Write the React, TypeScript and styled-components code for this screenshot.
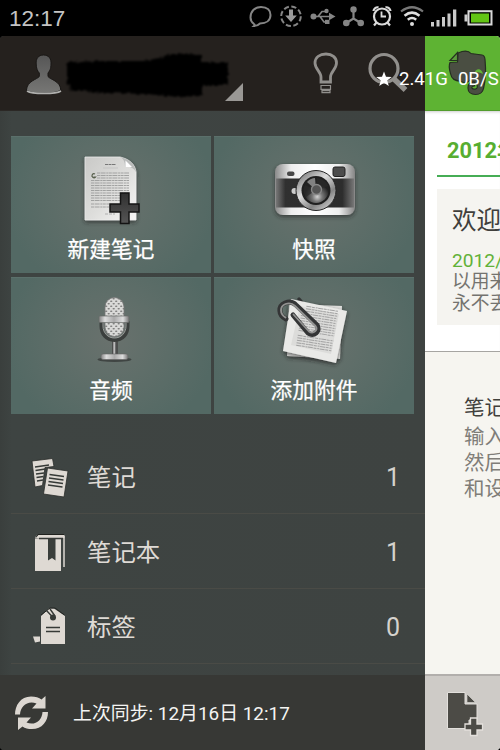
import React from 'react';
import styled, { createGlobalStyle } from 'styled-components';

const GlobalStyle = createGlobalStyle`
  * { box-sizing: border-box; }
  body { margin: 0; background: #000; overflow: hidden; }
`;

const Screen = styled.div`
  position: relative;
  display: flex;
  flex-direction: column;
  width: 500px;
  height: 750px;
  overflow: hidden;
  background: #000;
  font-family: Roboto, 'Noto Sans CJK SC', sans-serif;
`;

const StatusBar = styled.div`
  display: flex;
  align-items: center;
  justify-content: space-between;
  height: 36px;
  padding-left: 9px;
  flex: none;
`;

const Clock = styled.span`
  font-family: 'Liberation Sans', sans-serif;
  font-size: 22.5px;
  line-height: 36px;
  padding-top: 1px;
  color: #c4c4c4;
`;

const Glyph = styled.svg`
  display: block;
  flex: none;
`;

const Body = styled.div`
  display: flex;
  flex: 1;
  min-height: 0;
  border-radius: 4px;
  overflow: hidden;
`;

const Drawer = styled.div`
  display: flex;
  flex-direction: column;
  width: 425px;
  flex: none;
  background: linear-gradient(90deg, #3a3f3d, #3e4442 12px, #3e4341);
`;

const DrawerHeader = styled.div`
  height: 75px;
  flex: none;
  background: #25211e;
  border-bottom: 1px solid #2b2825;
`;

const Tiles = styled.div`
  display: grid;
  grid-template-columns: 200px 200px;
  grid-template-rows: 137px 137px;
  gap: 4px 3px;
  padding: 25px 0 0 11px;
  flex: none;
`;

const Tile = styled.div`
  display: flex;
  flex-direction: column;
  align-items: center;
  background: radial-gradient(ellipse 105px 100px at 50% 45%, #69716d 0%, #5f6e69 45%, #536964 100%);
  box-shadow: inset 0 1px 0 #5b706b;
`;

const TileLabel = styled.span`
  margin-top: 5px;
  font-size: 21.7px;
  line-height: 30px;
  color: #fff;
  -webkit-text-stroke: 0.25px #fff;
`;

const List = styled.div`
  display: flex;
  flex-direction: column;
  flex: 1;
  padding: 25px 0 0 11px;
`;

const Row = styled.div`
  display: flex;
  align-items: center;
  height: 75px;
  padding: 3px 25px 0 17px;
  border-bottom: 1px solid #4a4b46;
`;

const RowLabel = styled.span`
  flex: 1;
  margin-left: 15px;
  font-size: 24.4px;
  line-height: 36px;
  color: #dedad5;
`;

const RowCount = styled.span`
  font-size: 25px;
  line-height: 36px;
  color: #d5d2cd;
`;

const SyncBar = styled.div`
  display: flex;
  align-items: center;
  height: 75px;
  flex: none;
  padding: 0 0 0 11px;
  background: #373835;
`;

const SyncText = styled.span`
  margin-left: 21px;
  padding-top: 2px;
  font-size: 18.9px;
  line-height: 30px;
  color: #f4f4f2;
  white-space: nowrap;
`;

const Notes = styled.div`
  display: flex;
  flex-direction: column;
  flex: 1;
  min-width: 0;
  overflow: hidden;
  background: #fff;
  white-space: nowrap;
`;

const BrandBar = styled.div`
  height: 75px;
  flex: none;
  background: #5eb333;
  border-bottom: 1px solid #529c2c;
`;

const Feed = styled.div`
  height: 240px;
  flex: none;
  padding-left: 12px;
  box-shadow: inset 0 3px 3px -2px #ccc;
`;

const Month = styled.div`
  height: 66px;
  padding: 25px 0 0 10px;
  border-bottom: 2px solid #46ad55;
  font-size: 21.8px;
  font-weight: 700;
  line-height: 30px;
  color: #57ae31;
`;

const NoteCard = styled.div`
  height: 136px;
  margin-top: 12px;
  padding: 13px 0 0 15px;
  background: #f5f4f0;
`;

const NoteTitle = styled.div`
  font-size: 24.5px;
  line-height: 38px;
  color: #403f3c;
`;

const NoteDate = styled.div`
  margin-top: 10px;
  font-size: 19.2px;
  line-height: 22px;
  color: #61b138;
`;

const NoteLine = styled.div`
  font-size: 18.8px;
  line-height: 21.7px;
  color: #74736f;
`;

const Help = styled.div`
  flex: 1;
  padding: 40px 0 0 39px;
  border-top: 1px solid #a6a5a2;
  background: #f6f5f0;
`;

const HelpTitle = styled.div`
  font-size: 20.5px;
  line-height: 32px;
  color: #41403c;
`;

const HelpLine = styled.div`
  position: relative;
  top: 1px;
  font-size: 20.5px;
  line-height: 25.9px;
  color: #7f7d78;
`;

const AddBar = styled.div`
  height: 76px;
  flex: none;
  border-top: 2px solid #b2afac;
  background: #cecbc7;
`;

const SpeedOverlay = styled.div`
  position: absolute;
  left: 376px;
  top: 66px;
  display: flex;
  align-items: center;
  height: 25px;
  font-size: 18.6px;
  color: #fff;
  white-space: pre;
`;

const SpeedValue = styled.span<{ $gap: number }>`
  margin-left: ${(p) => p.$gap}px;
`;

const StatusIcons = () => (
  <Glyph width="260" height="36" viewBox="240 0 260 36" fill="none">
    <g stroke="#858585" strokeWidth="2">
      <path d="M254 24c-2-1.500-3.500-3.500-3.500-6.500 0-6 4-10.500 10.500-10.500s9.500 3.500 9.500 8c0 5.500-4.500 8.500-10.500 8.500-1.500 1.500-3 2.500-6 2.500 .8-.7 1-1.300 0-2z" />
      <circle cx="291" cy="16.300" r="9.800" strokeDasharray="5.200 2.500" />
    </g>
    <path d="M289 9.500h4v6h3.800L291 22l-5.800-6.500h3.800z" fill="#999" />
    <g stroke="#858585" strokeWidth="1.700">
      <path d="M314 16.500h17M318 16.500l4-5h4M320 16.500l4 5.500h3" />
    </g>
    <g fill="#858585">
      <circle cx="313.500" cy="16.500" r="3" /><path d="M329 12.800l6.500 3.700-6.500 3.700z" />
      <circle cx="326.500" cy="11" r="2.200" /><path d="M325 19.800h4.500V24H325z" />
      <circle cx="353.500" cy="9.500" r="3.200" /><circle cx="346.300" cy="23" r="3.300" /><circle cx="360.700" cy="23" r="3.300" />
    </g>
    <path d="M353.500 9v9.500M346.300 23l7.200-4.500 7.200 4.500" stroke="#858585" strokeWidth="2.200" />
    <g stroke="#dadada" strokeWidth="2.200">
      <circle cx="382" cy="16.500" r="8" /><path d="M381.500 11.500v5h4.500" strokeWidth="1.800" />
      <path d="M373.500 11a4 4 0 0 1 5-3.600M390.500 11a4 4 0 0 0-5-3.600M376.500 22.500l-2.500 3M387.500 22.500l2.500 3" />
    </g>
    <path d="M401 11.500q11-8.500 22 0" stroke="#777" strokeWidth="2.200" />
    <path d="M404.500 15.800q7.500-6.300 15 0M407.800 19.800q4.200-3.500 8.400 0" stroke="#dedede" strokeWidth="2.500" />
    <circle cx="412" cy="24" r="2" fill="#ddd" />
    <path d="M431 22h3v4.500h-3zM436.500 20h3v6.500h-3zM442 17h3v9.500h-3zM447.500 13.500h3v13h-3zM453 9.500h3.300v17H453z" fill="#c9c9c9" />
    <rect x="468.500" y="11.200" width="23" height="13.300" stroke="#d8d8d8" strokeWidth="2" />
    <path d="M464.500 14.500h3v7h-3z" fill="#ccc" /><path d="M471 13.500h18v9h-18z" fill="#62c414" />
  </Glyph>
);

const HeaderArt = () => (
  <Glyph width="425" height="74" viewBox="0 36 425 74" fill="none">
    <defs>
      <linearGradient id="person" x2="0" y2="1"><stop stopColor="#565656" /><stop offset="1" stopColor="#777775" /></linearGradient>
      <filter id="rough" x="-5%" y="-20%" width="110%" height="140%">
        <feTurbulence type="fractalNoise" baseFrequency=".25" numOctaves="2" seed="4" />
        <feDisplacementMap in="SourceGraphic" scale="4" xChannelSelector="R" yChannelSelector="G" />
        <feGaussianBlur stdDeviation=".8" />
      </filter>
    </defs>
    <path d="M43.500 55c5 0 8 3.500 7.500 9 0 5-1.500 7-3 9v3.500c2 3 12.500 4.500 12.800 13.500-5 4.500-29.500 4.500-34.300 0 .5-9 10.500-10.500 12.800-13.500V73c-2-2-3-5-3.100-9-.5-5.500 2.300-9 7.300-9z" fill="url(#person)" stroke="#191715" />
    <path d="M27 91c5 3.300 29 3.300 34 0" stroke="#b0b0ae" strokeWidth="1.500" />
    <path filter="url(#rough)" d="M67 62l36-1h40l17-3 10-4h17l14 1v7h27v23h-26v11l-25 1-30-3-45-1-19-2H71l-1-6h-3z" fill="#000" />
    <path d="M243 83v18h-18z" fill="#9a9895" />
    <g stroke="#918f8c">
      <path d="M321 82v-5c0-5-6-8-6-14 0-6 5-9 11-9s10.500 3.500 10.500 9c0 6-6 9-6 14v5z" strokeWidth="2.800" />
      <path d="M321 85.500h9.500v3.800H321zM322 90.700h8v2h-8z" strokeWidth="1.200" />
      <circle cx="384" cy="68.500" r="14" strokeWidth="3.200" />
      <path d="M394 79l11.500 11" strokeWidth="5.500" />
    </g>
  </Glyph>
);

const ElephantLogo = () => (
  <Glyph width="75" height="74" viewBox="425 36 75 74">
    <path d="M458 53l4-1.500c4-1 7-.5 9 2l11 1.500c2 .3 2.800 2 3 4.500 1 10 .5 21-1.500 29-1 5-4 6-8 6-5 0-7.500-3-7.500-6.500 0-5 3-6.500 6.500-6v4c-2 0-3 1-2.500 2.200 1 1.500 5 1.300 5.200-.7 .5-3-.5-4-3.700-4-1.500 0-2.500-2-3-4-2 3-6 4-9.500 2-6-1-9.500-2-10.500-8-1.500-5-2-8-.5-11l7.500-.5z" fill="#4a4e42" stroke="#252f20" strokeWidth="1.200" />
    <path d="M450 60.500l7.500-8v8z" fill="#5c9a3e" stroke="#263021" strokeWidth="1.200" />
    <path d="M475 72c1-4 7-4 8 2-3-1.500-5-2-8-2z" fill="#62b638" />
  </Glyph>
);

const NewNoteArt = () => (
  <Glyph width="100" height="94" viewBox="61 136 100 94">
    <defs>
      <linearGradient id="paper" x2="1" y2="1"><stop stopColor="#c9c9c7" /><stop offset=".55" stopColor="#dededc" /><stop offset="1" stopColor="#f7f7f6" /></linearGradient>
      <linearGradient id="plus" x2="0" y2="1"><stop stopColor="#303030" /><stop offset="1" stopColor="#555" /></linearGradient>
      <filter id="shade" x="-20%" y="-20%" width="140%" height="150%"><feDropShadow dx="0" dy="2" stdDeviation="2" floodColor="#222" floodOpacity=".65" /></filter>
    </defs>
    <path filter="url(#shade)" d="M85 157h35c9 2 15 7 16 15v48H85z" fill="url(#paper)" stroke="#eee" strokeWidth=".7" />
    <path d="M120 157c4 2 5 5 5 10 5-1 9 1 11 5-1-8-7-13-16-15z" fill="#b9bbba" />
    <path d="M125.500 160.500v6.500h6.500z" fill="#fff" />
    <path d="M105 164.500h11" stroke="#777" strokeWidth="1.200" strokeDasharray="3 .5" />
    <path d="M103 168h15" stroke="#bbb" strokeWidth=".6" />
    <path d="M97 173h32M97 175.500h32M97 178h32M91 180.500h38M91 183h38M91 185.500h38M91 188h38M91 190.500h38M91 193h38M91 195.500h34M91 198h34M91 200.500h34M91 204h18M91 207h18" stroke="#a1a2a1" strokeWidth="1.100" strokeDasharray="3 .6 5 .7 2 .5" />
    <path d="M95 174a2 2 0 1 0 .5 3h-2" fill="none" stroke="#58604d" strokeWidth="1.200" />
    <path d="M105 214h10" stroke="#999" strokeWidth=".7" strokeDasharray="3 1" />
    <path d="M120.500 193h8.500v11h10v8h-10v11.500h-8.500V212H110v-8h10.500z" fill="url(#plus)" stroke="#141414" strokeWidth="1.500" />
  </Glyph>
);

const CameraArt = () => (
  <Glyph width="100" height="94" viewBox="264 136 100 94">
    <defs>
      <linearGradient id="silver"><stop stopColor="#8a8a8a" /><stop offset=".2" stopColor="#eee" /><stop offset=".5" stopColor="#fff" /><stop offset=".8" stopColor="#eee" /><stop offset="1" stopColor="#858585" /></linearGradient>
      <linearGradient id="leather"><stop stopColor="#777" /><stop offset=".12" stopColor="#303030" /><stop offset=".85" stopColor="#2d2d2d" /><stop offset="1" stopColor="#777" /></linearGradient>
      <linearGradient id="ring" x1=".1" x2=".9" y2="1"><stop stopColor="#707070" /><stop offset=".4" stopColor="#ddd" /><stop offset=".7" stopColor="#858585" /><stop offset="1" stopColor="#ddd" /></linearGradient>
      <radialGradient id="glass" cx=".55" cy=".75"><stop stopColor="#d2d2d2" /><stop offset=".4" stopColor="#777" /><stop offset="1" stopColor="#222" /></radialGradient>
    </defs>
    <rect filter="url(#shade)" x="275" y="164" width="80" height="51" rx="8" fill="url(#silver)" />
    <path d="M276 178.500h78v29h-78z" fill="url(#leather)" />
    <rect x="287" y="171.500" width="7.500" height="4.500" rx="2" fill="#484848" />
    <rect x="333" y="167" width="12" height="9.500" rx="2" fill="#4c4c4c" stroke="#222" />
    <circle cx="294.500" cy="191" r="3" fill="#ccc" />
    <circle cx="316" cy="190.500" r="20" fill="url(#ring)" stroke="#252525" />
    <circle cx="316" cy="190.500" r="14.500" fill="#202020" />
    <circle cx="316" cy="190.500" r="12.500" fill="url(#glass)" />
    <path d="M316 190l1-12c6 1 10 4 11 8zM316 190l-10 7c-3-4-3-8-1-12z" fill="#292929" opacity=".75" />
    <path d="M316 190l-9-8c3-3 5-4 8-4z" fill="#aaa" opacity=".7" />
    <circle cx="316.500" cy="189.500" r="5" fill="#555" stroke="#888" strokeWidth="1.300" />
  </Glyph>
);

const MicArt = () => (
  <Glyph width="100" height="94" viewBox="61 277 100 94">
    <defs>
      <pattern id="mesh" width="5" height="5" patternUnits="userSpaceOnUse">
        <rect width="5" height="5" fill="#d9d9d7" /><ellipse cx="1.200" cy="1.200" rx="1.200" ry=".7" fill="#7c7c7b" /><ellipse cx="3.700" cy="3.700" rx="1.200" ry=".7" fill="#7c7c7b" />
      </pattern>
      <linearGradient id="band"><stop stopColor="#858585" /><stop offset=".2" stopColor="#ddd" /><stop offset=".5" stopColor="#aaa" /><stop offset=".8" stopColor="#ddd" /><stop offset="1" stopColor="#777" /></linearGradient>
    </defs>
    <ellipse cx="114.500" cy="359.500" rx="17" ry="2.500" fill="#222" opacity=".55" />
    <path d="M112 339h6v20h-6z" fill="#4c4e4d" /><path d="M113.300 340h2v19h-2z" fill="#bbb" />
    <path d="M101.500 321v5c0 8 5 14 13 14s13-6 13-14v-5" fill="none" stroke="#3b3f3d" strokeWidth="4" />
    <path d="M103 321v5c0 7 5 12 11.500 12S126 333 126 326v-5" fill="none" stroke="#9b9d9b" strokeWidth="1" />
    <rect x="105" y="297.500" width="19" height="39" rx="9.500" fill="url(#mesh)" stroke="#777" strokeWidth=".8" />
    <rect x="99" y="316" width="30" height="6.500" rx="1" fill="url(#band)" stroke="#686b69" strokeWidth=".7" />
    <rect x="101" y="354" width="27" height="5.500" rx="2" fill="url(#band)" stroke="#666" strokeWidth=".6" />
  </Glyph>
);

const AttachArt = () => (
  <Glyph width="100" height="94" viewBox="264 277 100 94" fill="none" strokeLinejoin="round" strokeLinecap="round">
    <path d="M299 299l5 6" stroke="#343536" strokeWidth="3.500" />
    <path filter="url(#shade)" d="M289 304l53 2-2 53-53-3z" fill="#dededc" />
    <path filter="url(#shade)" d="M291 299l56 12-11 52-53-12z" fill="#e9e9e7" />
    <path d="M300 306l39 8-8 40-40-9z" fill="#dcdcda" />
    <g transform="rotate(9 315 335)" stroke="#a3a3a3" strokeLinecap="butt" strokeWidth="1" strokeDasharray="5 .6 3 .8 2 .5">
      <path d="M302 308h32M302 310.500h32M302 313h32M298 315.500h36M298 318h36M298 320.500h36M298 323h36M298 325.500h36M298 328h36M298 330.500h36M298 333h36M298 338h36M298 340.500h36M298 343h36M298 345.500h36M298 348h36" />
    </g>
    <path d="M286 319c-8-4-8-13-1-16 4-1.500 8-1 11 2l21 20c4 6-3 12-9 8l-15-18" stroke="#343536" strokeWidth="5" />
    <path d="M285.500 317.500c-6-4-6-11 0-13.500 4-1.500 7-.5 9.500 2l20.500 20c3 4-2 8.500-6.500 5.500l-15.500-17" stroke="#929291" strokeWidth="1.800" />
  </Glyph>
);

const NotesIcon = () => (
  <Glyph width="44" height="48" viewBox="28 452 44 48">
    <path d="M32 459l20.500-2.500 1.500 8-9 1-2.500 18-7.500 1.500z" fill="#ded9d3" stroke="#292c2a" strokeWidth=".8" />
    <path d="M35 465l14-2M35.500 468.500l10-1.500M36 472l8-1M36.500 475.500l7-1M37 479l6-1" stroke="#363a37" strokeWidth="1.300" />
    <path d="M47.500 466l20.500 3-4 26-20.500-3z" fill="#ded9d3" stroke="#292c2a" strokeWidth=".8" />
    <path d="M49.500 472.500l14.500 2M49 476l14.500 2M48.500 479.500l14.500 2M48 483l14.500 2" stroke="#363a37" strokeWidth="1.300" />
  </Glyph>
);

const NotebookIcon = () => (
  <Glyph width="44" height="48" viewBox="28 528 44 48">
    <path d="M35 537q1-3 4-3h25.500v3l-26 .5z" fill="#ded9d3" />
    <path d="M36 536.500l2-3h26" fill="none" stroke="#20221f" />
    <path d="M35 537.500h26V570H35z" fill="#ded9d3" />
    <path d="M39 537.500h24" stroke="#373b38" strokeWidth="1.400" />
    <path d="M48 538h7.500v21.500l-3.500-2.500-4 2.500z" fill="#393d3a" />
    <path d="M64 535v31" stroke="#ded9d3" strokeWidth="1.500" />
  </Glyph>
);

const TagIcon = () => (
  <Glyph width="44" height="48" viewBox="28 603 44 48">
    <path d="M41 615l8-7.500h5L65 615v28H41z" fill="#ded9d3" />
    <path d="M41 614l9-7h5l9.500 7" fill="none" stroke="#222522" />
    <circle cx="53" cy="616.500" r="3" fill="#363a37" />
    <path d="M46.500 609.500l7.500 8M50 608l5 7" stroke="#363a37" strokeWidth="1.400" />
    <path d="M46 626.500h14M46 630.500h14" stroke="#363a37" strokeWidth="1.500" />
    <path d="M33 635.500h7v5l-5 1z" fill="#ded9d3" />
  </Glyph>
);

const SyncIcon = () => (
  <Glyph width="41" height="44" viewBox="11 691 41 44" fill="#dcd7d1">
    <path d="M15 714.500c0-9 5.500-18 16-18 4.500 0 8 1 10.500 3l4-3.500v12.500H32l4.500-5c-9-3.500-16 3-16.500 11z" />
    <path d="M48 712c0 9.500-6 17-16 17-4 0-7-.5-9.500-2.500L18 730v-12.500h13l-4.500 5c8 3.500 15.500-1.500 16-10.500z" />
  </Glyph>
);

const AddNoteIcon = () => (
  <Glyph width="75" height="74" viewBox="425 676 75 74" fill="#4c4b46" stroke="#e3e0dc">
    <path d="M447.500 692.500H465V704h12v16h-8v8.500h-21.500z" strokeWidth="1" />
    <path d="M467 694l8.500 8.500H467z" strokeWidth=".6" />
    <path d="M470.500 718h6.500v6h5.500v6H477v5.500h-6.500V730H465v-6h5.500z" strokeWidth="1.300" />
  </Glyph>
);

const tiles = [
  { label: '新建笔记', Art: NewNoteArt },
  { label: '快照', Art: CameraArt },
  { label: '音频', Art: MicArt },
  { label: '添加附件', Art: AttachArt },
];

const rows = [
  { label: '笔记', count: 1, Icon: NotesIcon },
  { label: '笔记本', count: 1, Icon: NotebookIcon },
  { label: '标签', count: 0, Icon: TagIcon },
];

export default function App() {
  return (
    <>
      <GlobalStyle />
      <Screen>
        <StatusBar>
          <Clock>12:17</Clock>
          <StatusIcons />
        </StatusBar>
        <Body>
          <Drawer>
            <DrawerHeader><HeaderArt /></DrawerHeader>
            <Tiles>
              {tiles.map(({ label, Art }) => (
                <Tile key={label}><Art /><TileLabel>{label}</TileLabel></Tile>
              ))}
            </Tiles>
            <List>
              {rows.map(({ label, count, Icon }) => (
                <Row key={label}><Icon /><RowLabel>{label}</RowLabel><RowCount>{count}</RowCount></Row>
              ))}
            </List>
            <SyncBar>
              <SyncIcon />
              <SyncText>上次同步: 12月16日 12:17</SyncText>
            </SyncBar>
          </Drawer>
          <Notes>
            <BrandBar><ElephantLogo /></BrandBar>
            <Feed>
              <Month>2012年</Month>
              <NoteCard>
                <NoteTitle>欢迎</NoteTitle>
                <NoteDate>2012/</NoteDate>
                <NoteLine>以用来</NoteLine>
                <NoteLine>永不丢</NoteLine>
              </NoteCard>
            </Feed>
            <Help>
              <HelpTitle>笔记</HelpTitle>
              <HelpLine>输入</HelpLine>
              <HelpLine>然后</HelpLine>
              <HelpLine>和设</HelpLine>
            </Help>
            <AddBar><AddNoteIcon /></AddBar>
          </Notes>
        </Body>
        <SpeedOverlay>
          <Glyph width="16" height="16" viewBox="0 0 16 16" fill="#fff">
            <path d="M8 .5l2 5.300 5.800.2-4.600 3.500 1.600 5.500L8 11.800 3.200 15l1.600-5.500L.2 6l5.800-.2z" />
          </Glyph>
          <SpeedValue $gap={7}>2.41G</SpeedValue>
          <SpeedValue $gap={10}>0B/S</SpeedValue>
        </SpeedOverlay>
      </Screen>
    </>
  );
}
